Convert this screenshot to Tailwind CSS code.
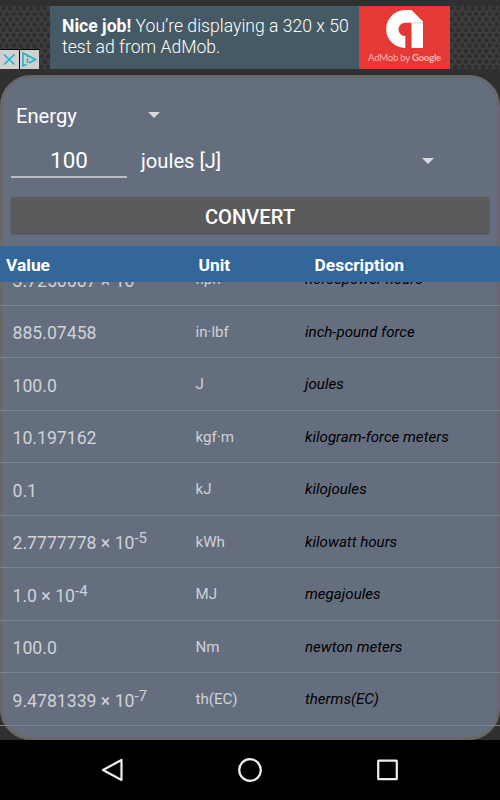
<!DOCTYPE html>
<html lang="en">
  <head>
    <meta charset="UTF-8" />
    <meta name="viewport" content="width=device-width, initial-scale=1.0" />
    <title>Unit Converter</title>
    <script src="https://cdn.jsdelivr.net/npm/@tailwindcss/browser@4"></script>
  </head>
  <body
    class="flex h-[800px] w-[500px] flex-col overflow-hidden bg-[#303030] font-[Roboto,sans-serif] text-white"
  >
    <!-- Ad banner -->
    <header class="relative mt-1.5 flex h-[63px] shrink-0 justify-center">
      <svg class="absolute inset-0 h-full w-full">
        <defs>
          <pattern id="mesh" width="6.9" height="10.6" patternUnits="userSpaceOnUse">
            <rect width="6.9" height="10.6" fill="#3f3f3f" />
            <g fill="#2d2d2d">
              <circle cx="3.45" cy="2.65" r="2.4" />
              <circle cx="0" cy="7.95" r="2.4" />
              <circle cx="6.9" cy="7.95" r="2.4" />
            </g>
          </pattern>
        </defs>
        <rect width="500" height="63" fill="url(#mesh)" />
      </svg>
      <div class="relative flex w-[400px]">
        <div
          class="w-[309px] bg-[#455a64] pt-[9.5px] pl-3 text-[17.6px] leading-[21px] font-light whitespace-nowrap"
        >
          <p><b class="font-bold">Nice job!</b> You’re displaying a 320 x 50</p>
          <p>test ad from AdMob.</p>
        </div>
        <div class="flex w-[91px] flex-col items-center bg-[#e53935] pt-1">
          <svg class="h-[39px] w-[38px]" viewBox="0 0 38 39">
            <path
              d="M19.3 38A19 19 0 0 1 19 0H25.5L37 11.5V38H25.5V12.7H19A6.6 6.6 0 0 0 19.3 26Z"
              fill="#fff"
            />
            <path d="M25.5 12H37V13.5H25.5Z" fill="#ddd" />
          </svg>
          <p
            class="mt-[3px] font-[Lato,sans-serif] text-[9.5px] leading-3 tracking-[-0.2px] whitespace-nowrap text-[#ffb4b0]"
          >
            AdMob by <span class="font-bold">Google</span>
          </p>
        </div>
      </div>
      <div class="absolute bottom-0 left-0 flex gap-px bg-black pt-px">
        <svg class="h-[19px] w-[19px] bg-[#d0d0d0]" viewBox="0 0 19 19">
          <path d="M4 4.5L14.5 14.5M14.5 4.5L4 14.5" stroke="#17b1cf" stroke-width="1.5" />
        </svg>
        <svg class="h-[19px] w-[19px] bg-[#d0d0d0]" viewBox="0 0 19 19" fill="none">
          <path
            d="M6.5 14.3L3 16V3L15.5 9.5L9 13M7.5 8.5V13M7.5 5.8V7.2"
            stroke="#17b1cf"
            stroke-width="1.5"
          />
        </svg>
      </div>
    </header>

    <main class="relative mt-1.5 flex h-[665px] shrink-0 flex-col">
      <div
        class="absolute inset-0 rounded-[31px] border-[3px] border-[#686868] bg-[#656e7f]"
      ></div>

      <div class="relative h-[171px]">
        <div class="flex h-[82px] w-[160px] items-center justify-between pl-4 text-[20.2px]">
          <span>Energy</span>
          <svg class="-mt-0.5 h-1.5 w-3" viewBox="0 0 12 6">
            <path d="M0 0H12L6 6Z" fill="#d8dade" />
          </svg>
        </div>
        <div class="-mt-4 flex h-[37px] pl-[11px]">
          <div class="w-[116px] border-b-2 border-[#b9bdc5] text-center text-[22.4px] leading-[39px]">
            100
          </div>
          <div class="ml-3.5 flex w-[293px] items-center justify-between pt-[3px] text-[20.2px]">
            <span>joules [J]</span>
            <svg class="-mt-px h-1.5 w-3" viewBox="0 0 12 6">
              <path d="M0 0H12L6 6Z" fill="#d8dade" />
            </svg>
          </div>
        </div>
        <button
          class="mx-[11px] mt-[19px] h-9 w-[478px] rounded-[2px] bg-[#5a5a5a] pt-0.5 text-[20.2px] leading-[37px] font-medium shadow-[0_1px_2px_rgba(0,0,0,0.35)]"
        >
          CONVERT
        </button>
      </div>

      <div
        class="relative grid h-9 shrink-0 grid-cols-[192.5px_116px_1fr] items-center bg-[#336699] pt-[3px] pl-1.5 text-[17.4px] font-bold"
      >
        <span>Value</span>
        <span>Unit</span>
        <span>Description</span>
      </div>

      <div class="relative flex-1 overflow-hidden">
        <div id="results" class="-mt-[29px]"></div>
      </div>
    </main>

    <!-- Navigation bar -->
    <nav class="flex h-[60px] shrink-0 items-center justify-center gap-[112px] bg-black">
      <svg class="h-[26px] w-[26px]" viewBox="0 0 26 26" fill="none" stroke="#eee" stroke-width="2.2">
        <path d="M4 13L22.5 3V23Z" stroke-linejoin="round" />
      </svg>
      <svg class="h-[26px] w-[26px]" viewBox="0 0 26 26" fill="none" stroke="#eee" stroke-width="2.2">
        <circle cx="13" cy="13" r="10.8" />
      </svg>
      <svg class="h-[26px] w-[26px]" viewBox="0 0 26 26" fill="none" stroke="#eee" stroke-width="2.2">
        <rect x="3.2" y="3.6" width="18.6" height="18.6" rx="0.5" />
      </svg>
    </nav>

    <script>
      const results = document.getElementById("results");
      const rows = [
        ["3.7250607 × 10", "-5", "hph", "horsepower hours"],
        ["885.07458", "", "in·lbf", "inch-pound force"],
        ["100.0", "", "J", "joules"],
        ["10.197162", "", "kgf·m", "kilogram-force meters"],
        ["0.1", "", "kJ", "kilojoules"],
        ["2.7777778 × 10", "-5", "kWh", "kilowatt hours"],
        ["1.0 × 10", "-4", "MJ", "megajoules"],
        ["100.0", "", "Nm", "newton meters"],
        ["9.4781339 × 10", "-7", "th(EC)", "therms(EC)"],
      ];

      rows.forEach(([value, exponent, unit, description]) => {
        const row = document.createElement("div");
        row.className =
          "grid h-[52.5px] grid-cols-[183px_109.5px_1fr] items-center border-b border-[#7b8391] pt-px pl-[12.5px] text-[15.1px] whitespace-nowrap text-[#cfd2d7]";
        row.innerHTML = `
          <span class="pt-[3px] text-[17.65px]">${value}<sup class="-top-[6px] text-[15px]">${exponent}</sup></span>
          <span class="pt-px">${unit}</span>
          <span class="pt-px text-black italic">${description}</span>`;
        results.appendChild(row);
      });
    </script>
  </body>
</html>
